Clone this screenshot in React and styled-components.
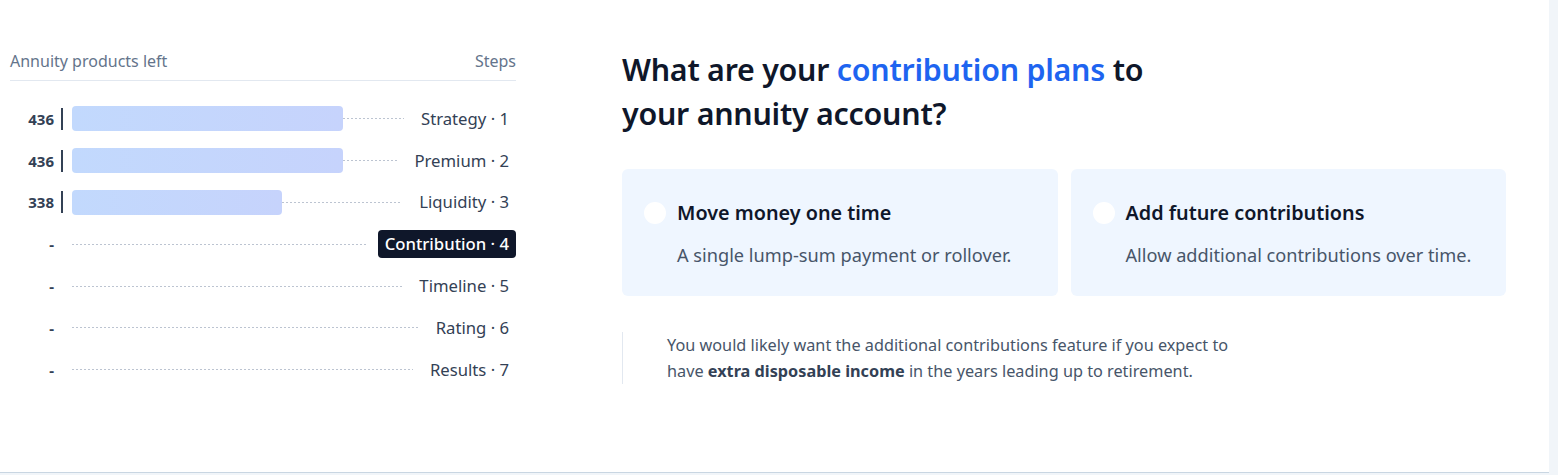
import React from "react"
import styled, { createGlobalStyle } from "styled-components"

const Global = createGlobalStyle`
html, body { margin:0; padding:0; background:#f1f5f9; }
body { font-family:"Noto Sans", "Open Sans", sans-serif; color:#0f172a; }
`

const Page = styled.div`
display:flex;
width:1549px;
height:472px;
background:#fff;
border-bottom:1px solid #c9d6e2;
`
const Sidebar = styled.div`
width:506px;
margin-left:10px;
padding-top:50px;
`
const SideHead = styled.div`
display:flex;
justify-content:space-between;
line-height:22px;
padding-bottom:8px;
border-bottom:1px solid #e2e8f0;
font-size:16px;
color:#64748b;
`
const Rows = styled.div`
display:flex;
flex-direction:column;
padding-top:17px;
`
const Row = styled.div`
display:flex;
align-items:center;
height:41.8px;
`
const Count = styled.div`
width:44px;
text-align:right;
font-size:15px;
font-weight:700;
color:#334155;
`
const Tick = styled.div`
width:2px;
height:22px;
margin-left:7px;
background:${p => p.$show ? "#334155" : "transparent"};
`
const Track = styled.div`
flex:1;
display:flex;
align-items:center;
margin-left:9px;
margin-right:10px;
`
const Bar = styled.div`
height:25px;
border-radius:4px;
background:linear-gradient(90deg,#c2d9fd,#c6d3fc);
flex:none;
`
const Dots = styled.div`
flex:1;
height:1px;
background:repeating-linear-gradient(90deg,#bcc4d1 0 2px,transparent 2px 4px);
`
const Step = styled.div`
padding:0 7px;
height:28px;
line-height:28px;
border-radius:4px;
font-size:16.7px;
white-space:nowrap;
color:${p => p.$active ? "#fff" : "#334155"};
background:${p => p.$active ? "#0f172a" : "transparent"};
font-weight:${p => p.$active ? 500 : 400};
`
const Main = styled.div`
margin-left:106px;
width:884px;
padding-top:48px;
`
const Title = styled.h1`
margin:0;
font-size:30.4px;
line-height:44px;
font-weight:600;
color:#0f172a;
letter-spacing:-0.25px;
width:560px;
`
const Accent = styled.span`
color:#1e64f0;
`
const Cards = styled.div`
display:grid;
grid-template-columns:1fr 1fr;
gap:13px;
margin-top:33px;
`
const Card = styled.div`
background:#eff6ff;
border-radius:6px;
height:127px;
padding:31px 22px 0;
box-sizing:border-box;
display:flex;
gap:11px;
`
const Radio = styled.div`
width:22px;
height:22px;
border-radius:50%;
background:#fff;
flex:none;
margin-top:2px;
`
const CardTitle = styled.div`
font-size:19.8px;
font-weight:600;
color:#0f172a;
line-height:26px;
`
const CardDesc = styled.div`
font-size:18.2px;
color:#475569;
margin-top:16px;
line-height:26px;
`
const Note = styled.div`
margin-top:36px;
border-left:1px solid #e2e8f0;
padding:0 0 0 44px;
font-size:16.25px;
line-height:26px;
color:#475569;
width:580px;
b { font-weight:700; color:#334155; }
`

const steps = [
  { n: 436, name: "Strategy" },
  { n: 436, name: "Premium" },
  { n: 338, name: "Liquidity" },
  { n: null, name: "Contribution", active: true },
  { n: null, name: "Timeline" },
  { n: null, name: "Rating" },
  { n: null, name: "Results" },
]

export default function App() {
  return (
    <>
      <Global />
      <Page>
        <Sidebar>
          <SideHead>
            <span>Annuity products left</span>
            <span>Steps</span>
          </SideHead>
          <Rows>
            {steps.map((s, i) => (
              <Row key={s.name}>
                <Count>{s.n ?? "-"}</Count>
                <Tick $show={s.n != null} />
                <Track>
                  {s.n != null && <Bar style={{ width: Math.round(s.n / 436 * 271) }} />}
                  <Dots />
                </Track>
                <Step $active={s.active}>{s.name} · {i + 1}</Step>
              </Row>
            ))}
          </Rows>
        </Sidebar>
        <Main>
          <Title>What are your <Accent>contribution plans</Accent> to your annuity account?</Title>
          <Cards>
            <Card>
              <Radio />
              <div>
                <CardTitle>Move money one time</CardTitle>
                <CardDesc>A single lump-sum payment or rollover.</CardDesc>
              </div>
            </Card>
            <Card>
              <Radio />
              <div>
                <CardTitle>Add future contributions</CardTitle>
                <CardDesc>Allow additional contributions over time.</CardDesc>
              </div>
            </Card>
          </Cards>
          <Note>
            You would likely want the additional contributions feature if you expect to have <b>extra disposable income</b> in the years leading up to retirement.
          </Note>
        </Main>
      </Page>
    </>
  )
}
